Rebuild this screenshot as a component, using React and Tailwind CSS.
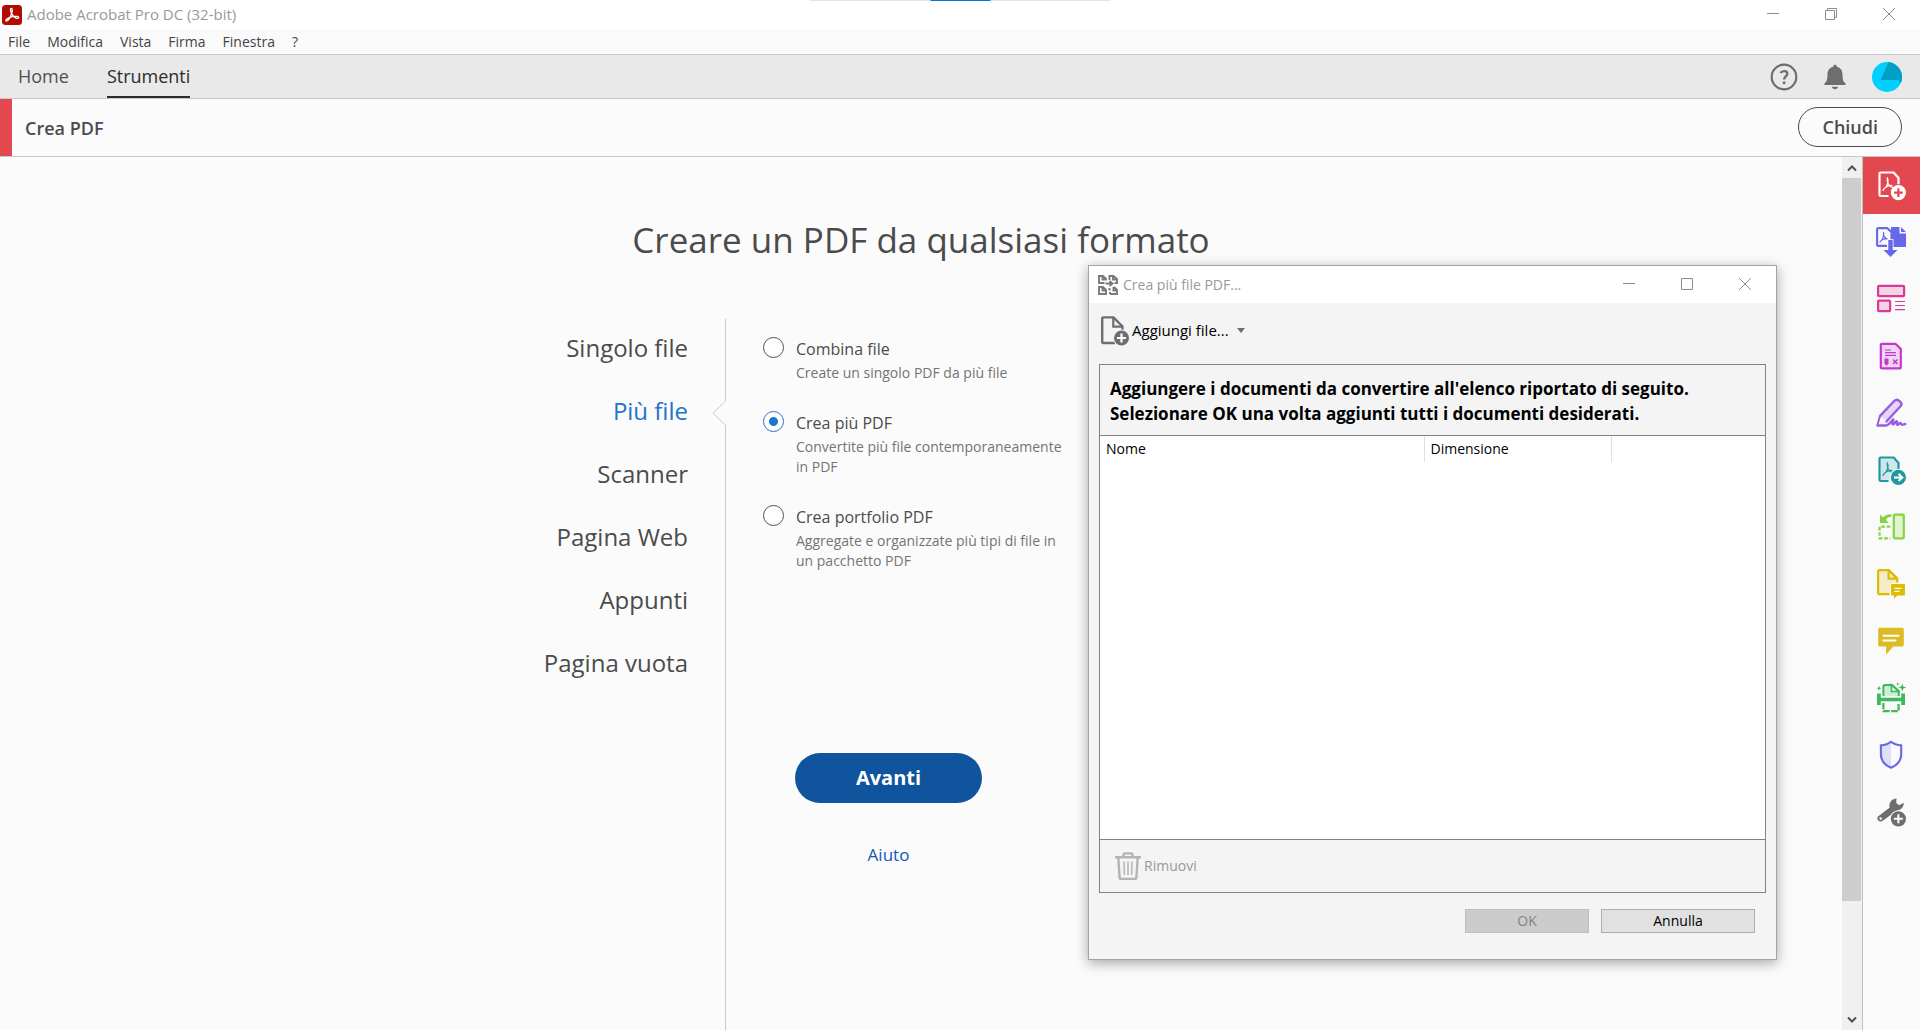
import React from "react";

const Glyph = ({ children, size = 30, className = "" }) => (
  <svg
    width={size}
    height={size}
    viewBox="0 0 30 30"
    fill="none"
    aria-hidden="true"
    className={`shrink-0 overflow-visible ${className}`}
  >
    {children}
  </svg>
);

const PdfMark = ({ color }) => (
  <path
    d="M7 20.5c1.2-2.8 5-5 8.8-5.2 M11.3 7.8c-.3 2.5 0 4.4 1 6.2 1 1.7 2.2 2.8 4.2 3.4 M11.3 7.8c1.2 2.5.3 6.5-1.2 9.4"
    stroke={color}
    strokeWidth="1.3"
    strokeLinecap="round"
  />
);

const PagePdf = ({ color, fill }) => (
  <>
    <path
      d="M12.5 26H4.7c-.7 0-1.2-.5-1.2-1.2V3.7c0-.7.5-1.2 1.2-1.2h13L22.5 8v6.2"
      fill={fill}
      stroke={color}
      strokeWidth="2.2"
    />
    <PdfMark color={color} />
  </>
);

const CreateIcon = () => (
  <Glyph>
    <PagePdf color="#fff" fill="none" />
    <circle cx="22.4" cy="22.6" r="7.6" fill="#fff" />
    <path d="M22.4 18.2v8.8M18 22.6h8.8" stroke="#e34850" strokeWidth="2.2" />
  </Glyph>
);

const CombineIcon = () => (
  <Glyph>
    <path d="M15 0h8.5v6.5H30V19.2c0 .5-.3.8-.8.8H15z" fill="#6767ec" />
    <path d="M25 0l5 5h-5z" fill="#6767ec" />
    <path
      d="M11 18.9H2.2c-.6 0-1.1-.5-1.1-1.1V2.2c0-.6.5-1.1 1.1-1.1h9l4.3 4.2V13"
      fill="#fafafa"
      stroke="#6767ec"
      strokeWidth="2.1"
    />
    <path
      d="M4 15c1.2-2 4-3.3 7-3.4M7.5 5.5c-.3 2 .2 4.500 3.5 6.5M7.5 5.5c.8 2-.2 4.5-1.5 7"
      stroke="#6767ec"
      strokeWidth="1.2"
      strokeLinecap="round"
    />
    <path d="M12.3 13h4.4v10h4.8L14.5 30 7.5 23h4.8z" fill="#6767ec" stroke="#fafafa" strokeWidth="1.6" paintOrder="stroke" />
  </Glyph>
);

const OrganizeIcon = () => (
  <Glyph>
    <g stroke="#dc3996" strokeWidth="2.2" fill="#f4d3e5">
      <rect x="2.1" y="1.8" width="26" height="10.4" rx="1" />
      <rect x="2.1" y="16.6" width="12" height="10.6" rx="1" />
    </g>
    <path d="M19 17.5h10M19 21.5h10M19 25.6h10" stroke="#dc3996" strokeWidth="1.1" />
  </Glyph>
);

const FormIcon = () => (
  <Glyph>
    <path
      d="M6 2.8h13.5l5.3 5.2v18.2c0 .7-.5 1.2-1.2 1.2H6c-.7 0-1.2-.5-1.2-1.2V4c0-.7.5-1.2 1.2-1.2z"
      fill="#f1d6f3"
      stroke="#c238cc"
      strokeWidth="2.2"
    />
    <path d="M9 9h6M9 11.7h11M9 14.4h11" stroke="#c238cc" strokeWidth="1.2" />
    <path d="M8.5 17.5h4v5l-2 2.2-2-2.2z" fill="#c238cc" />
    <path d="M17 18.5l4.5 4.5M21.5 18.5L17 23" stroke="#c238cc" strokeWidth="1.6" />
  </Glyph>
);

const EditIcon = () => (
  <Glyph>
    <path
      d="M1.5 27.5l2.8-9.8L18.5 2.8c1.3-1.4 3-1.4 4.4-.2l1.6 1.5c1.3 1.3 1.3 2.8 0 4.2L10.5 23.5z"
      fill="#e3d6f6"
    />
    <path
      d="M10.5 23.5L24.5 8.3c1.3-1.4 1.3-2.9 0-4.2l-1.6-1.5c-1.4-1.2-3.1-1.2-4.4.2L4.3 17.7 1.5 27.5h9c3.5-1.5 5-4.7 6.7-6.2.8 1.7-1.6 4.3-.7 5 1.2.8 3-2.8 4.3-3 1 .7-.6 2.7.4 3.4 1.2.5 2.2-1.9 3.3-1.8.9.3.3 1.9 1.7 1.9 1.200.1 1.600-.6 3.100-.8"
      stroke="#9a5ce0"
      strokeWidth="2.4"
      strokeLinejoin="round"
      strokeLinecap="round"
    />
    <path d="M5 18.500l5 4.500-7.500 3.500z" fill="#fafafa" />
  </Glyph>
);

const ExportIcon = () => (
  <Glyph>
    <PagePdf color="#1e9a9d" fill="#cfe7e8" />
    <circle cx="22.4" cy="22.4" r="8.6" fill="#fafafa" />
    <circle cx="22.4" cy="22.4" r="7.6" fill="#1e9a9d" />
    <path d="M18 22.4h7M22.5 18.8l3.8 3.6-3.8 3.6" stroke="#fff" strokeWidth="2" />
  </Glyph>
);

const RotateIcon = () => (
  <Glyph>
    <rect x="17.8" y="2.7" width="10" height="23.6" rx="1" fill="#e2f3d2" stroke="#86d33f" strokeWidth="2.2" />
    <path d="M14.3 14.7H3.6V26.4h10.7" stroke="#86d33f" strokeWidth="2.2" strokeDasharray="3.6 1.8" />
    <path d="M4 2.5v8.5h9l-3-3c1-2.2 2.7-3.2 5.5-3.2V2.2C11.5 2 8.5 3.2 7 5.6z" fill="#86d33f" />
  </Glyph>
);

const PageCommentIcon = () => (
  <Glyph>
    <path
      d="M13.5 25.2H3.2c-.6 0-1.1-.5-1.1-1.1V2.2c0-.6.5-1.1 1.1-1.1h9.6L21.2 9.5v4"
      fill="#f4ecc8"
      stroke="#dcbc04"
      strokeWidth="2.2"
    />
    <path d="M12.6 1.1v8.6h8.6z" fill="#f4ecc8" stroke="#dcbc04" strokeWidth="2.2" strokeLinejoin="round" />
    <path
      d="M16 15h12c.6 0 1 .4 1 1v9.5c0 .6-.4 1-1 1h-6.5L18 29.8v-3.3h-2c-.6 0-1-.4-1-1V16c0-.6.4-1 1-1z"
      fill="#dcbc04"
      stroke="#fafafa"
      strokeWidth="2"
      paintOrder="stroke"
    />
    <path d="M18.5 19.3h7M18.5 22.3h5" stroke="#fff" strokeWidth="1.3" />
  </Glyph>
);

const CommentIcon = () => (
  <Glyph>
    <path
      d="M4 1.8h22c1.1 0 1.8.7 1.8 1.8v15.2c0 1.1-.7 1.8-1.8 1.8h-8.5L10 28.500v-7.900H4c-1.100 0-1.800-.7-1.800-1.800V3.600c0-1.100.7-1.800 1.800-1.800z"
      fill="#dcbb26"
    />
    <path d="M7.5 9.7h15M7.5 14.6h12" stroke="#fff" strokeWidth="2" strokeLinecap="round" />
  </Glyph>
);

const PrintIcon = () => (
  <Glyph>
    <path d="M7.4 13V3.5C7.4 2.5 8 2 9 2h7l6.8 6v5" fill="#cdeed6" stroke="#3db95a" strokeWidth="2" />
    <path d="M15.5 2v6.5h7z" fill="#fafafa" stroke="#3db95a" strokeWidth="1.7" />
    <path d="M1 10.5h3.8v4.300h20.400v-4.300H29V22h-3.800v-3.800H4.800V22H1z" fill="#3db95a" />
    <path d="M7.4 20v8.2h15.2V20" stroke="#3db95a" strokeWidth="2.2" strokeDasharray="6.5 1.5" />
    <path
      d="M26.3.5l1 3 3 1-3 1-1 3-1-3-3-1 3-1zM3 3l.7 1.500 1.500.7-1.500.7L3 7.500l-.7-1.600-1.500-.7 1.500-.7zM21.800-.8l.5 1.200 1.200.5-1.200.5-.5 1.200-.5-1.200-1.200-.5 1.200-.5z"
      fill="#3db95a"
    />
  </Glyph>
);

const ShieldIcon = () => (
  <Glyph>
    <path d="M15 2C12 4.5 9 5 5.2 5.3V14c0 6.5 4 11 9.8 13.6z" fill="#dfdff8" />
    <path
      d="M15 1.8c3 2.6 6 3.4 10.200 3.500V14c0 6.500-4.200 11.200-10.200 13.700C9 25.200 4.900 20.500 4.900 14V5.300C9 5.200 12 4.400 15 1.800z"
      stroke="#6767ec"
      strokeWidth="2.1"
      strokeLinejoin="round"
    />
  </Glyph>
);

const WrenchIcon = () => (
  <Glyph>
    <path
      d="M13.7 10.500c-1-3.700 1-7.600 5.200-8.800l1.600-.2-.3 4.500 3 2.200 4.400-2.500c.5 4.300-2.800 7.300-6.600 7.700L6.700 23.800c-3 2.300-6.900-1.300-4.700-4.300zM4.700 20.200a1.300 1.300 0 1 0 .01 0z"
      fill="#6e6e6e"
      fillRule="evenodd"
    />
    <circle cx="22.4" cy="21.8" r="8.6" fill="#fafafa" />
    <circle cx="22.4" cy="21.8" r="7.6" fill="#6e6e6e" />
    <path d="M22.4 17.3v9M17.9 21.8h9" stroke="#fff" strokeWidth="2" />
  </Glyph>
);

const tools = [
  ["Crea PDF", CreateIcon],
  ["Combina file", CombineIcon],
  ["Organizza pagine", OrganizeIcon],
  ["Prepara modulo", FormIcon],
  ["Compila e firma", EditIcon],
  ["Esporta PDF", ExportIcon],
  ["Ruota pagine", RotateIcon],
  ["Invia per commenti", PageCommentIcon],
  ["Commento", CommentIcon],
  ["Scansione e OCR", PrintIcon],
  ["Proteggi", ShieldIcon],
  ["Altri strumenti", WrenchIcon],
];

const Minimize = () => (
  <svg width="12" height="12" viewBox="0 0 12 12" aria-hidden="true">
    <path d="M0 5.5h12" stroke="#8c8c8c" />
  </svg>
);
const Restore = () => (
  <svg width="12" height="12" viewBox="0 0 12 12" fill="none" stroke="#8c8c8c" aria-hidden="true">
    <path d="M.5 2.5h9v9h-9zM2.5 2.5v-2h9v9h-2" />
  </svg>
);
const Maximize = () => (
  <svg width="12" height="12" viewBox="0 0 12 12" fill="none" stroke="#8c8c8c" aria-hidden="true">
    <path d="M.5.5h11v11H.5z" />
  </svg>
);
const Close = () => (
  <svg width="12" height="12" viewBox="0 0 12 12" fill="none" stroke="#8c8c8c" aria-hidden="true">
    <path d="M0 0l12 12M12 0L0 12" />
  </svg>
);

const controls = (Middle) => [
  ["Riduci a icona", Minimize],
  [Middle === Restore ? "Ripristina" : "Ingrandisci", Middle],
  ["Chiudi finestra", Close],
];

const WindowControls = ({ middle }) => (
  <div className="ml-auto flex h-full pb-0.5 pr-[2px]">
    {controls(middle).map(([label, Icon]) => (
      <button key={label} aria-label={label} className="flex w-[58px] items-center justify-center">
        <Icon />
      </button>
    ))}
  </div>
);

const AcrobatLogo = () => (
  <svg width="20" height="20" viewBox="0 0 20 20" fill="none" aria-hidden="true">
    <rect width="20" height="20" rx="3.5" fill="#b30b00" />
    <path
      d="M9.5 3.3c-1.3-.2-1.2 1.7-.6 3.5.9 2.6 2.8 5.3 5.2 6.3 1.5.6 2.7.2 2.6-.7-.1-1-2.3-1.3-5-1-2.7.4-6 1.6-7.4 3.1-.8.9-.5 1.800.4 1.500 1.700-.6 4-4.500 5.100-8 .7-2.500.7-4.500-.3-4.700z"
      stroke="#fff"
      strokeWidth="1.3"
      strokeLinejoin="round"
    />
  </svg>
);

const MultiFileIcon = () => (
  <svg width="20" height="20" viewBox="0 0 20 20" fill="none" stroke="#7a7a7a" strokeWidth="1.9" aria-hidden="true">
    <path d="M6.500 8H1V1h4l3 3v1.500M4.500 1v3.500H8M11.500 5V1h4L19 4v4h-2.500M15 1v3.500h4" />
    <path d="M8 17v2H1v-7h4l3 3v2M4.500 12v3.500H8M12 19h7v-4l-3-3M12 19v-2M15.500 12v3.500H19" />
    <path d="M7.500 8.500H14M11.500 6l3 2.500-3 2.500" />
    <path d="M11.500 13v2.500" />
  </svg>
);

const AddFileIcon = () => (
  <Glyph>
    <path d="M14 27H2.300c-.6 0-1.100-.5-1.100-1.100V2.500c0-.6.5-1.100 1.100-1.100h10.200L21.500 10.500v4" stroke="#6e6e6e" strokeWidth="2.4" />
    <path d="M12.300 1.500v9.200h9.200" stroke="#6e6e6e" strokeWidth="2.2" />
    <circle cx="20.5" cy="22" r="8.5" fill="#f4f4f4" />
    <circle cx="20.5" cy="22" r="7.5" fill="#6e6e6e" />
    <path d="M20.5 17.500v9M16 22h9" stroke="#fff" strokeWidth="2.2" />
  </Glyph>
);

const TrashIcon = () => (
  <svg width="26" height="28" viewBox="0 0 26 28" fill="none" stroke="#b4b4b4" aria-hidden="true">
    <path d="M0 5.200h26M8.500 5V2.800c0-.9.5-1.400 1.400-1.400h6.200c.9 0 1.400.5 1.400 1.400V5M3.300 5.500l1.300 20.300c0 .7.5 1.100 1.200 1.100h14.400c.7 0 1.200-.4 1.200-1.100l1.300-20.300" strokeWidth="2.400" />
    <path d="M9 9.500l.4 13.500M13 9.500V23M17 9.500L16.600 23" strokeWidth="1.5" />
  </svg>
);

const menus = ["File", "Modifica", "Vista", "Firma", "Finestra", "?"];
const sources = ["Singolo file", "Più file", "Scanner", "Pagina Web", "Appunti", "Pagina vuota"];
const options = [
  { id: "combina", title: "Combina file", text: "Create un singolo PDF da più file" },
  { id: "multi", title: "Crea più PDF", text: "Convertite più file contemporaneamente in PDF" },
  { id: "portfolio", title: "Crea portfolio PDF", text: "Aggregate e organizzate più tipi di file in un pacchetto PDF" },
];

function Header() {
  return (
    <header>
      <div className="relative flex h-[29px] items-center bg-white pl-0.5">
        <AcrobatLogo />
        <span className="pl-[5px] text-[15px] text-[#999]">Adobe Acrobat Pro DC (32-bit)</span>
        <div className="absolute left-1/2 top-0 flex h-px w-[301px] -translate-x-1/2 justify-center bg-[#e5e5e5]">
          <div className="w-[60px] bg-[#0078d7]" />
        </div>
        <WindowControls middle={Restore} />
      </div>
      <nav className="flex h-[26px] items-center gap-[17px] border-b border-[#c8c8c8] bg-[#fafafa] px-2">
        {menus.map((m) => (
          <button key={m} className="text-sm text-[#444]">{m}</button>
        ))}
      </nav>
      <div className="flex h-11 items-stretch border-b border-[#c8c8c8] bg-[#e9e9e9] px-[18px]">
        <nav className="flex gap-[38px] text-lg">
          <button className="border-b-2 border-transparent text-[#505050]">Home</button>
          <button className="border-b-2 border-[#2c2c2c] text-[#2c2c2c]">Strumenti</button>
        </nav>
        <div className="ml-auto flex items-center gap-[25px]">
          <button aria-label="Guida">
            <svg width="28" height="28" viewBox="0 0 28 28" fill="none" aria-hidden="true">
              <circle cx="14" cy="14" r="12.300" stroke="#6e6e6e" strokeWidth="2.2" />
              <path d="M10.500 10c.8-1.500 2.300-1.900 3.700-1.900 1.700 0 3.100.9 3.100 2.600 0 2.700-3.200 2.800-3.200 5.800" stroke="#6e6e6e" strokeWidth="2.400" />
              <circle cx="14.100" cy="19.700" r="1.500" fill="#6e6e6e" />
            </svg>
          </button>
          <button aria-label="Notifiche">
            <svg width="24" height="28" viewBox="0 0 24 28" fill="#6e6e6e" aria-hidden="true">
              <path d="M10.200 3.700c0-2.500 3.600-2.500 3.600 0 4 1 5.700 4 5.700 7.500 0 5.300.8 7.600 3 9 .3.300.2 1.800-.5 1.800H2c-.7 0-.8-1.500-.5-1.800 2.200-1.400 3-3.700 3-9 0-3.500 1.700-6.500 5.700-7.500zM9 23.800h6c0 3.200-6 3.200-6 0z" />
            </svg>
          </button>
          <button aria-label="Profilo">
            <svg width="30" height="30" viewBox="0 0 30 30" aria-hidden="true">
              <circle cx="15" cy="15" r="15" fill="#00cfff" />
              <path d="M16.500.1A15 15 0 0 1 28.800 21L26.500 18H8.700z" fill="#009fc7" />
            </svg>
          </button>
        </div>
      </div>
      <div className="flex h-[58px] items-center border-b border-[#c8c8c8] bg-[#fbfbfb] pr-[18px]">
        <div className="h-full w-3 bg-[#e34850]" />
        <h1 className="pl-[13px] text-lg font-semibold text-[#4b4b4b]">Crea PDF</h1>
        <button className="mb-0.5 ml-auto h-10 rounded-full border border-[#4b4b4b] px-[23px] text-lg font-semibold leading-5 text-[#4b4b4b]">
          Chiudi
        </button>
      </div>
    </header>
  );
}

function CreatePanel() {
  return (
    <main className="flex flex-1 flex-col bg-[#fbfbfb] pt-14">
      <h2 className="text-center text-[35px] leading-[54px] text-[#4b4b4b]">Creare un PDF da qualsiasi formato</h2>
      <div className="mx-auto mt-[52px] flex w-[792px] flex-1">
        <nav className="flex w-[201px] shrink-0 flex-col border-r border-[#c8c8c8]">
          {sources.map((s) => (
            <button
              key={s}
              className={`relative h-[63px] pb-1.5 pr-[37px] text-right text-2xl ${
                s === "Più file" ? "text-[#2074ca]" : "text-[#4b4b4b]"
              }`}
            >
              {s}
              {s === "Più file" && (
                <svg width="14" height="24" viewBox="0 0 14 24" className="absolute -right-px top-[19px]" aria-hidden="true">
                  <path d="M14 0v24" stroke="#fbfbfb" strokeWidth="3" />
                  <path d="M13.500 0L1 12l12.500 12" fill="none" stroke="#c8c8c8" />
                </svg>
              )}
            </button>
          ))}
        </nav>
        <div className="flex flex-col pl-[37px] pt-[17px]">
          <fieldset aria-label="Tipo di creazione" className="flex h-[417px] flex-col gap-[27px]">
            {options.map((o) => (
              <div key={o.id} className="flex gap-3">
                <input
                  type="radio"
                  id={o.id}
                  name="mode"
                  defaultChecked={o.id === "multi"}
                  className="mt-px size-[21px] shrink-0 appearance-none rounded-full border border-[#505050] bg-white checked:border-[#2074ca] checked:bg-[radial-gradient(circle,#2074ca_0,#2074ca_4px,#fff_5px)]"
                />
                <label htmlFor={o.id} className="w-[276px] pt-px">
                  <span className="block text-base leading-6 text-[#4b4b4b]">{o.title}</span>
                  <span className="block pt-0.5 text-sm leading-5 text-[#747474]">{o.text}</span>
                </label>
              </div>
            ))}
          </fieldset>
          <div className="ml-8 flex w-[187px] flex-col items-center">
            <button className="h-[50px] w-full rounded-full bg-[#10549d] text-xl font-bold text-white">Avanti</button>
            <a href="#aiuto" className="mt-[38px] text-[17px] leading-7 text-[#1358b0]">Aiuto</a>
          </div>
        </div>
      </div>
    </main>
  );
}

function Scrollbar() {
  return (
    <div className="flex w-[21px] flex-col items-center border-r border-[#c0c0c0] bg-[#f0f0f0]">
      <button aria-label="Scorri su" className="flex h-[21px] items-center justify-center">
        <svg width="10" height="8" viewBox="0 0 10 8" fill="none" aria-hidden="true">
          <path d="M1 6.500l4-4 4 4" stroke="#505050" strokeWidth="2" />
        </svg>
      </button>
      <div className="flex w-full flex-1 flex-col">
        <div className="h-[87%] w-[19px] bg-[#cdcdcd]" />
      </div>
      <button aria-label="Scorri giù" className="flex h-[21px] items-center justify-center">
        <svg width="10" height="8" viewBox="0 0 10 8" fill="none" aria-hidden="true">
          <path d="M1 1.500l4 4 4-4" stroke="#505050" strokeWidth="2" />
        </svg>
      </button>
    </div>
  );
}

function ToolRail() {
  return (
    <aside className="flex w-[57px] flex-col bg-[#fafafa]">
      {tools.map(([label, Icon], i) => (
        <button
          key={label}
          aria-label={label}
          className={`flex h-[57px] items-center justify-center pb-0.5 pr-0.5 ${i === 0 ? "bg-[#e34850]" : ""}`}
        >
          <Icon />
        </button>
      ))}
    </aside>
  );
}

function Dialog() {
  return (
    <section
      role="dialog"
      aria-label="Crea più file PDF"
      className="absolute right-[143px] top-[265px] w-[689px] border border-[#a3a3a3] bg-[#f4f4f4] text-sm text-black shadow-[0_3px_12px_rgba(0,0,0,0.35)]"
    >
      <div className="flex h-[37px] items-center bg-white pl-[9px]">
        <MultiFileIcon />
        <span className="pl-[5px] text-[#999]">Crea più file PDF...</span>
        <WindowControls middle={Maximize} />
      </div>
      <div className="px-[10px] pb-[26px]">
        <button className="flex h-[61px] items-center pb-1.5 pl-0.5 text-[15px]">
          <AddFileIcon />
          <span className="pl-px">Aggiungi file...</span>
          <svg width="8" height="5" viewBox="0 0 8 5" className="ml-2" aria-hidden="true">
            <path d="M0 0h8L4 5z" fill="#6e6e6e" />
          </svg>
        </button>
        <div className="border border-[#828282]">
          <p className="h-[71px] border-b border-[#828282] px-[10px] pt-[11px] text-[17px] font-bold leading-[25px]">
            Aggiungere i documenti da convertire all'elenco riportato di seguito.
            <br />
            Selezionare OK una volta aggiunti tutti i documenti desiderati.
          </p>
          <div className="h-[404px] border-b border-[#828282] bg-white">
            <table className="w-full table-fixed border-collapse">
              <thead>
                <tr className="h-[26px] text-left">
                  <th className="w-[324px] border-r border-[#e0e0e0] px-1.5 font-normal">Nome</th>
                  <th className="w-[187px] border-r border-[#e0e0e0] px-1.5 font-normal">Dimensione</th>
                  <th aria-label="Altro" />
                </tr>
              </thead>
            </table>
          </div>
          <div className="flex h-[52px] items-center pl-[15px]">
            <button disabled className="flex items-center gap-[3px] text-[#999]">
              <TrashIcon />
              <span>Rimuovi</span>
            </button>
          </div>
        </div>
        <div className="mt-4 flex justify-end gap-3 pr-[11px] leading-none">
          <button disabled className="h-6 w-[124px] border border-[#bfbfbf] bg-[#ccc] text-[#838383]">OK</button>
          <button className="h-6 w-[154px] border border-[#adadad] bg-[#e1e1e1]">Annulla</button>
        </div>
      </div>
    </section>
  );
}

export default function App() {
  return (
    <div className="relative flex h-screen flex-col overflow-hidden bg-[#fbfbfb] font-['Open_Sans','Noto_Sans',sans-serif]">
      <Header />
      <div className="flex min-h-0 flex-1">
        <CreatePanel />
        <Scrollbar />
        <ToolRail />
      </div>
      <Dialog />
    </div>
  );
}
